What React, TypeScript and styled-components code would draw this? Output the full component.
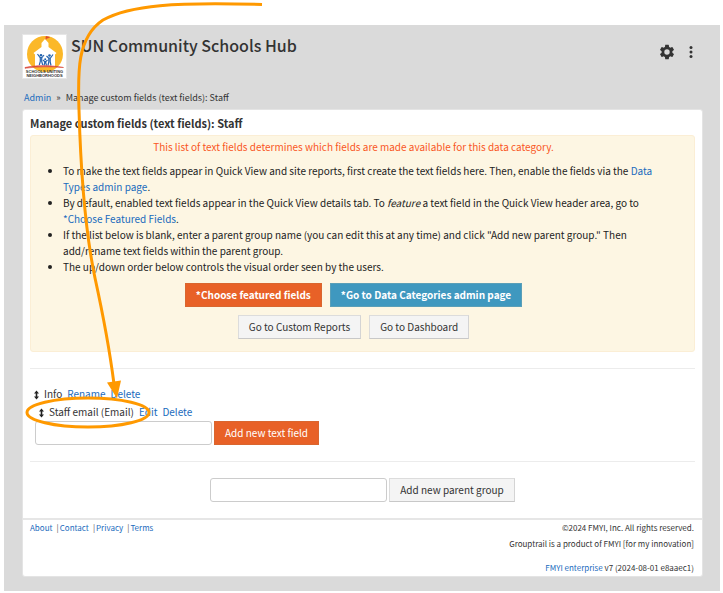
import React from "react";
import styled, { createGlobalStyle, css } from "styled-components";

const GlobalStyle = createGlobalStyle`
  * { box-sizing: border-box; }
  body {
    margin: 0;
    background: #fff;
    color: #333;
    font-family: "Noto Sans CJK SC", "Open Sans", sans-serif;
    font-size: 10px;
    line-height: 16px;
  }
  h1, h2, p, ul { margin: 0; }
  button, input { font: inherit; }
`;

const Page = styled.div`
  position: relative;
  padding: 25px 3px 3px 4px;
`;

const Shell = styled.div`
  background: #dadada;
  padding: 9px 17px 14px 18px;
`;

const Header = styled.header`
  display: flex;
  align-items: flex-start;
  height: 56px;
`;

const LogoLink = styled.a`
  display: block;
  width: 45px;
  height: 45px;
  margin-right: 4px;
  border: 1px solid #e6e6e6;
  background: #fff;
`;

const SiteTitle = styled.h1`
  flex: 1;
  font-size: 16px;
  line-height: 22px;
  font-weight: 500;
`;

const IconGroup = styled.div`
  display: flex;
  gap: 8px;
  padding: 9px 5px 0 0;
`;

const IconButton = styled.button`
  display: flex;
  padding: 0;
  border: 0;
  background: none;
  color: #333;
`;

const TextLink = styled.a`
  color: #1a6bbd;
  text-decoration: none;
`;

const Breadcrumb = styled.nav`
  display: flex;
  gap: 5px;
  padding: 0 2px 3px;
  font-size: 9px;
`;

const Card = styled.main`
  background: #fff;
  border-radius: 3px;
  border: 1px solid #e4e4e4;
`;

const Content = styled.div`
  padding: 3px 7px 16px;
`;

const CardTitle = styled.h2`
  font-size: 11px;
  line-height: 20px;
  font-weight: 700;
  padding-bottom: 2px;
`;

const Notice = styled.section`
  padding: 3px 26px 12px 8px;
  border: 1px solid #fbeed5;
  border-radius: 3px;
  background: #fdf6e3;
  color: #222;
`;

const NoticeLead = styled.p`
  color: #f9561f;
  text-align: center;
  padding-bottom: 8px;
`;

const NoticeList = styled.ul`
  padding: 0 0 0 24px;
  margin-bottom: 8px;
  list-style: disc outside;
`;

const ButtonRow = styled.div`
  display: flex;
  justify-content: center;
  gap: 8px;
  margin-bottom: 8px;
  & + & { margin-bottom: 0; }
`;

const tones = {
  orange: css`background: #e86127; border-color: #d9662f; color: #fff;`,
  blue: css`background: #3f98bf; border-color: #5a9fb8; color: #fff;`,
  plain: css`background: #f4f4f4; border-color: #dcdcdc #d4d4d4 #c8c8c8 #dcdcdc; color: #333;`,
};

const Button = styled.button<{ $tone: keyof typeof tones; $strong?: boolean }>`
  height: 24px;
  padding: 0 10px;
  border: 1px solid;
  line-height: 16px;
  white-space: nowrap;
  font-weight: ${(p) => (p.$strong ? 700 : 400)};
  ${(p) => tones[p.$tone]}
`;

const Rule = styled.hr`
  height: 1px;
  margin: 16px 0;
  border: 0;
  background: #ececec;
`;

const FieldGroup = styled.section`
  padding: 0 5px;
`;

const FieldRow = styled.div<{ $nested?: boolean }>`
  display: flex;
  align-items: center;
  gap: 5px;
  height: 18px;
  padding-left: ${(p) => (p.$nested ? 5 : 0)}px;
`;

const Form = styled.form<{ $center?: boolean }>`
  display: flex;
  gap: 2px;
  justify-content: ${(p) => (p.$center ? "center" : "flex-start")};
`;

const TextInput = styled.input`
  width: 177px;
  height: 24px;
  padding: 2px 6px;
  border: 1px solid #ccc;
  border-radius: 3px;
  background: #fff;
`;

const Footer = styled.footer`
  display: flex;
  justify-content: space-between;
  padding: 0 8px 0 7px;
  border-top: 2px solid #e6e6e6;
  font-size: 8px;
`;

const FooterLinks = styled.nav`
  display: flex;
  gap: 4px;
`;

const Separated = styled(TextLink)`
  &:not(:first-child)::before {
    content: "|";
    color: #555;
    margin-right: 1px;
  }
`;

const Legal = styled.div`
  text-align: right;
  p:last-child { padding-top: 8px; }
`;

const Annotation = styled.svg`
  position: absolute;
  top: 0;
  left: 0;
  pointer-events: none;
`;

const Logo = () => (
  <svg width="43" height="43" viewBox="0 0 43 43" role="img" aria-label="SUN Community Schools">
    <circle cx="22" cy="19" r="18" fill="#fbb829" />
    <path d="M12 32V19.500l-1.500-1.500 8-6V8l3.500-4 3.500 4v4l8 6-1.500 1.500V32z" fill="#fff" />
    <path d="M23 1.500v3M23 1.500l3.500 .8-3.500 1.200" stroke="#dd4b2c" strokeWidth="0.800" fill="#dd4b2c" />
    <g stroke="#2463ae" strokeWidth="1.200" fill="none">
      <path d="M14.500 19l2.500 3.500h2l2-2.500M17.300 23v3.500l-1 3.500M18.700 23v3.500l1 3.500M20 25l1.500 1.500h1.500l1.500-1.500M21.700 26v2l-.7 2.500M22.800 26v2l.7 2.500M23.500 21l2 2h2l2.500-3.500M25.800 23v4l-.8 3.500M27.200 23v4l.8 3.500" />
    </g>
    <g fill="#2463ae">
      <circle cx="18" cy="20.300" r="1.300" />
      <circle cx="22.200" cy="24.200" r="1" />
      <circle cx="26.500" cy="20.500" r="1.300" />
    </g>
    <path d="M2 32.500c10-2.500 26-2.500 38.500 0-13-1-27-1-38.500 .8z" fill="#d94335" stroke="#d94335" strokeWidth="0.600" />
    <g fontFamily="Liberation Sans, sans-serif" fontWeight="700" fontSize="4" textAnchor="middle" fill="#333">
      <text x="21.500" y="38.300">SCHOOLS UNITING</text>
      <text x="21.500" y="42">NEIGHBORHOODS</text>
    </g>
  </svg>
);

const Gear = () => (
  <svg width="18" height="18" viewBox="0 0 24 24" fill="currentColor" aria-hidden="true">
    <path d="M19.14 12.94c.04-.3.06-.61.06-.94s-.02-.64-.07-.94l2.03-1.58a.49.49 0 0 0 .12-.61l-1.92-3.32a.49.49 0 0 0-.59-.22l-2.39.96c-.5-.38-1.03-.7-1.62-.94l-.36-2.54a.48.48 0 0 0-.48-.41h-3.84c-.24 0-.43.17-.47.41l-.36 2.54c-.59.24-1.13.57-1.62.94l-2.39-.96a.48.48 0 0 0-.59.22L2.74 8.87c-.12.21-.08.47.12.61l2.03 1.58c-.05.3-.09.63-.09.94s.02.64.07.94l-2.03 1.58a.49.49 0 0 0-.12.61l1.92 3.32c.12.22.37.29.59.22l2.39-.96c.5.38 1.03.7 1.62.94l.36 2.54c.05.24.24.41.48.41h3.84c.24 0 .44-.17.47-.41l.36-2.54c.59-.24 1.13-.56 1.62-.94l2.39.96c.22.08.47 0 .59-.22l1.92-3.32a.48.48 0 0 0-.12-.61zM12 15.6a3.6 3.6 0 1 1 0-7.2 3.6 3.6 0 0 1 0 7.2z" />
  </svg>
);

const Dots = () => (
  <svg width="14" height="18" viewBox="0 0 14 18" fill="currentColor" aria-hidden="true">
    <circle cx="7" cy="4.500" r="1.500" />
    <circle cx="7" cy="9" r="1.500" />
    <circle cx="7" cy="13.500" r="1.500" />
  </svg>
);

const MoveIcon = () => (
  <svg width="4" height="10" viewBox="0 0 4 10" aria-hidden="true" overflow="visible">
    <path d="M1.500 1.500L4 4.500H2.300v3H4l-2.500 3-2.500-3H.7v-3H-1z" fill="#222" />
  </svg>
);

export default function App() {
  return (
    <>
      <GlobalStyle />
      <Page>
        <Shell>
          <Header>
            <LogoLink href="#home"><Logo /></LogoLink>
            <SiteTitle>SUN Community Schools Hub</SiteTitle>
            <IconGroup>
              <IconButton type="button" aria-label="Settings"><Gear /></IconButton>
              <IconButton type="button" aria-label="More"><Dots /></IconButton>
            </IconGroup>
          </Header>
          <Breadcrumb aria-label="Breadcrumb">
            <TextLink href="#admin">Admin</TextLink>
            <span>»</span>
            <span>Manage custom fields (text fields): Staff</span>
          </Breadcrumb>
          <Card>
            <Content>
              <CardTitle>Manage custom fields (text fields): Staff</CardTitle>
              <Notice>
                <NoticeLead>This list of text fields determines which fields are made available for this data category.</NoticeLead>
                <NoticeList>
                  <li>
                    To make the text fields appear in Quick View and site reports, first create the text fields here. Then, enable the fields via the{" "}
                    <TextLink href="#types">Data Types admin page</TextLink>.
                  </li>
                  <li>
                    By default, enabled text fields appear in the Quick View details tab. To <em>feature</em> a text field in the Quick View header area, go to{" "}
                    <TextLink href="#featured">*Choose Featured Fields</TextLink>.
                  </li>
                  <li>
                    If the list below is blank, enter a parent group name (you can edit this at any time) and click "Add new parent group." Then add/rename text fields within the parent group.
                  </li>
                  <li>The up/down order below controls the visual order seen by the users.</li>
                </NoticeList>
                <ButtonRow>
                  <Button type="button" $tone="orange" $strong>*Choose featured fields</Button>
                  <Button type="button" $tone="blue" $strong>*Go to Data Categories admin page</Button>
                </ButtonRow>
                <ButtonRow>
                  <Button type="button" $tone="plain">Go to Custom Reports</Button>
                  <Button type="button" $tone="plain">Go to Dashboard</Button>
                </ButtonRow>
              </Notice>
              <Rule />
              <FieldGroup>
                <FieldRow>
                  <MoveIcon />
                  <span>Info</span>
                  <TextLink href="#rename">Rename</TextLink>
                  <TextLink href="#delete-group">Delete</TextLink>
                </FieldRow>
                <FieldRow $nested>
                  <MoveIcon />
                  <span>Staff email (Email)</span>
                  <TextLink href="#edit">Edit</TextLink>
                  <TextLink href="#delete-field">Delete</TextLink>
                </FieldRow>
                <Form>
                  <TextInput type="text" aria-label="New text field" />
                  <Button type="button" $tone="orange">Add new text field</Button>
                </Form>
              </FieldGroup>
              <Rule />
              <Form $center>
                <TextInput type="text" aria-label="New parent group" />
                <Button type="button" $tone="plain">Add new parent group</Button>
              </Form>
            </Content>
            <Footer>
              <FooterLinks aria-label="Footer">
                <Separated href="#about">About</Separated>
                <Separated href="#contact">Contact</Separated>
                <Separated href="#privacy">Privacy</Separated>
                <Separated href="#terms">Terms</Separated>
              </FooterLinks>
              <Legal>
                <p>©2024 FMYI, Inc. All rights reserved.</p>
                <p>Grouptrail is a product of FMYI [for my innovation]</p>
                <p><TextLink href="#enterprise">FMYI enterprise</TextLink> v7 (2024-08-01 e8aaec1)</p>
              </Legal>
            </Footer>
          </Card>
        </Shell>
        <Annotation width="270" height="440" viewBox="0 0 270 440" aria-hidden="true">
          <g fill="none" stroke="#ff9900" strokeWidth="3">
            <path d="M262 4.500C175 2 130 5 103 20C76 38 78 75 79 110C81 180 87 240 95 278C102 310 109 345 114 384" />
            <ellipse cx="88" cy="412.500" rx="61" ry="14.500" />
          </g>
          <path d="M107 382.500l14-2-4 18z" fill="#ff9900" />
        </Annotation>
      </Page>
    </>
  );
}
